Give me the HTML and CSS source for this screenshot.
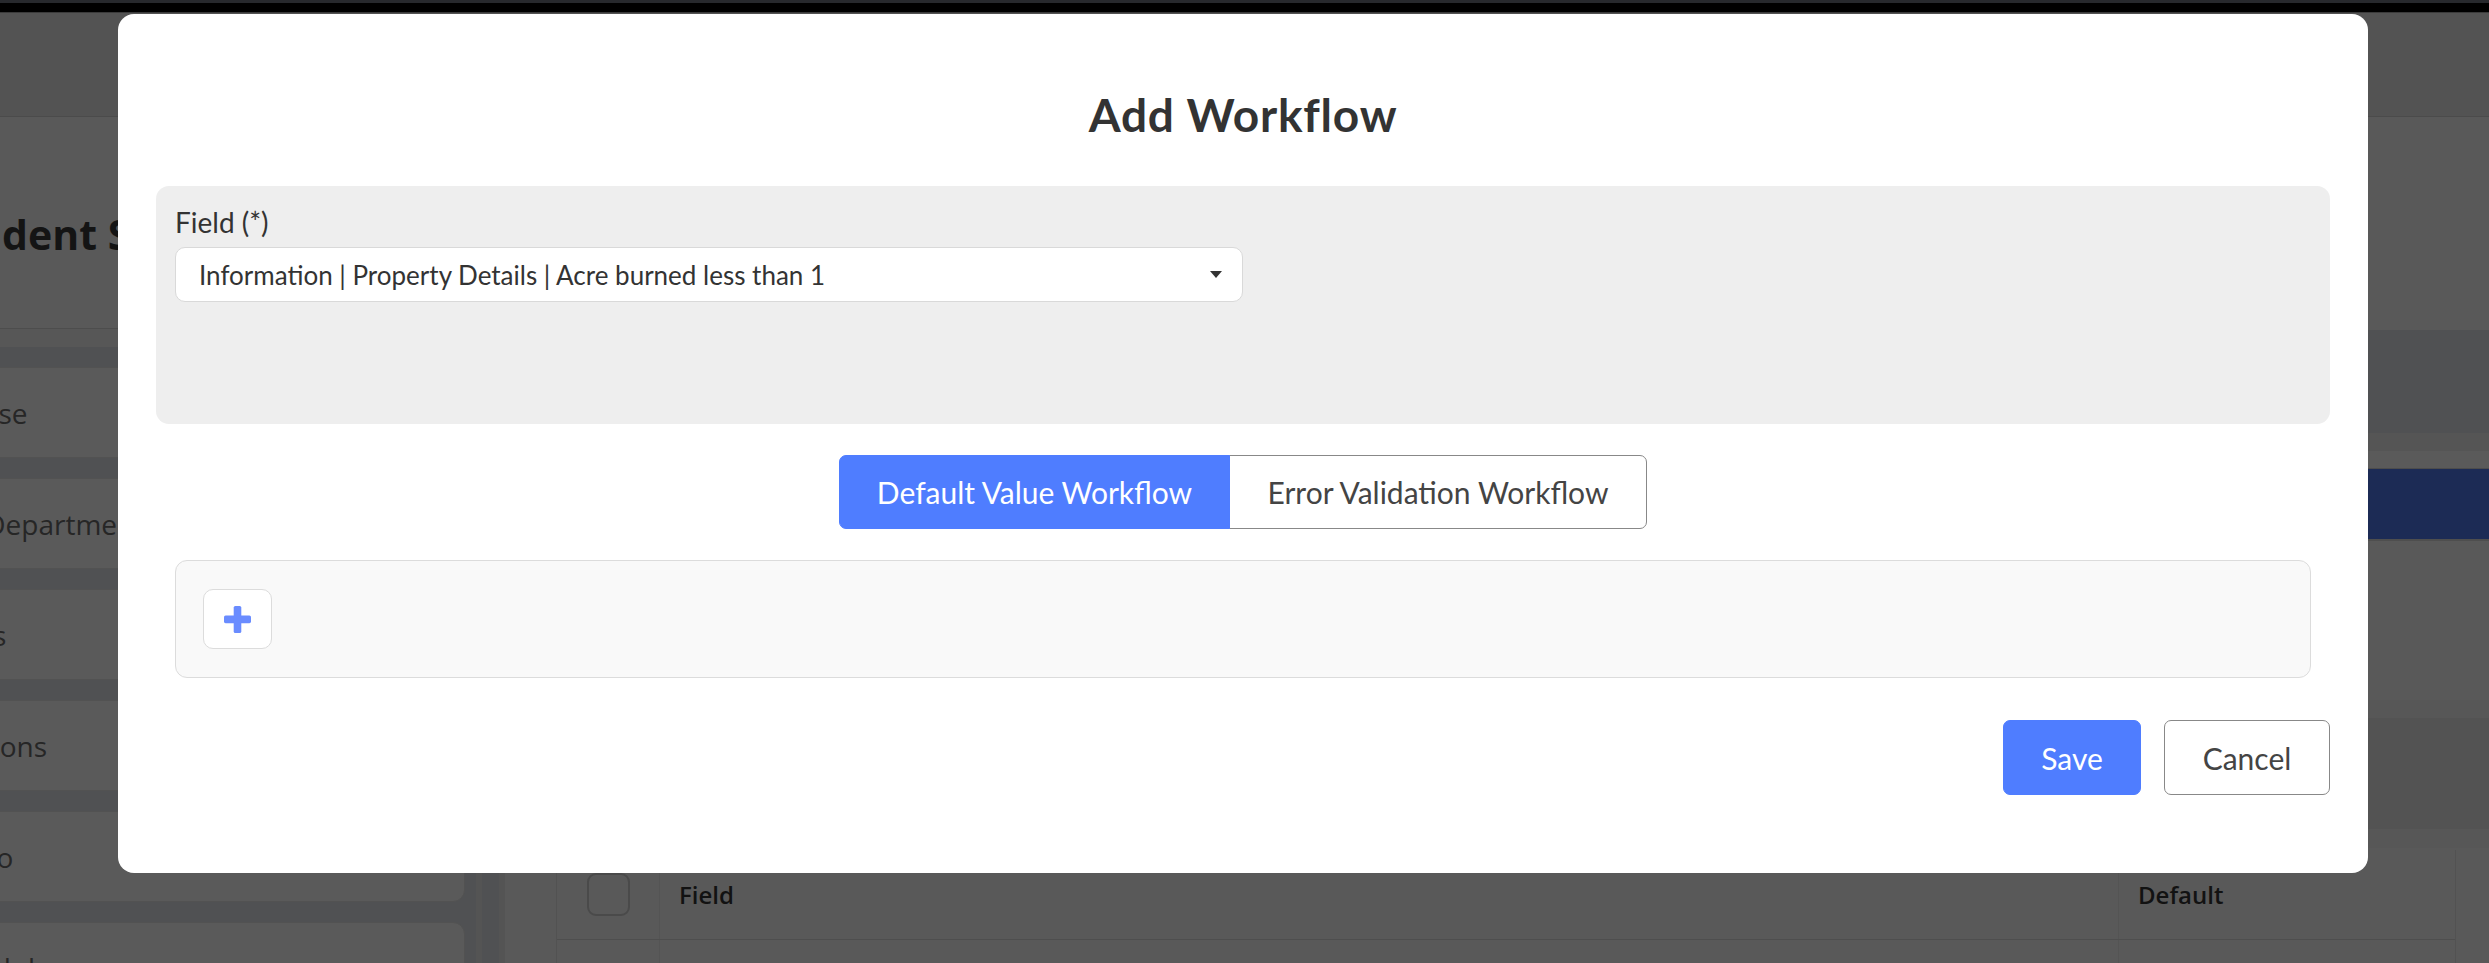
FILE: index.html
```html
<!DOCTYPE html>
<html lang="en">
<head>
<meta charset="utf-8">
<title>Add Workflow</title>
<link rel="stylesheet" href="styles.css">
</head>
<body>
<div class="page">
  <div class="topbar"></div>
  <div class="header"></div>
  <div class="main">
    <aside class="sidebar">
      <div class="side-title"><h2>Incident Settings</h2></div>
      <div class="side-spacer"></div>
      <ul class="side-list">
        <li class="side-item">Response</li>
        <li class="side-item">Police Department</li>
        <li class="side-item">Stations</li>
        <li class="side-item">Operations</li>
        <li class="side-item">Portfolio</li>
        <li class="side-item">Reschedule</li>
      </ul>
    </aside>
    <div class="scroll-strip"></div>
    <section class="content">
      <div class="c-hero"></div>
      <div class="c-band"></div>
      <div class="c-sub"></div>
      <div class="c-nav"></div>
      <div class="c-panel"></div>
      <div class="c-filter"></div>
      <div class="table-wrap">
        <div class="t-row t-head">
          <div class="t-check"><span class="checkbox"></span></div>
          <div class="t-field">Field</div>
          <div class="t-default">Default</div>
        </div>
        <div class="t-row">
          <div class="t-check"></div>
          <div class="t-field"></div>
          <div class="t-default"></div>
        </div>
      </div>
    </section>
  </div>
</div>

<div class="overlay">
  <div class="modal">
    <h1 class="modal-title">Add Workflow</h1>
    <div class="field-panel">
      <label class="field-label">Field (*)</label>
      <div class="select">
        <span class="select-text">Information | Property Details | Acre burned less than 1</span>
        <span class="caret"></span>
      </div>
    </div>
    <div class="tabs">
      <button class="tab tab-active">Default Value Workflow</button>
      <button class="tab tab-plain">Error Validation Workflow</button>
    </div>
    <div class="workflow-box">
      <button class="add-btn" aria-label="Add">
        <svg width="27" height="27" viewBox="0 0 27 27" aria-hidden="true">
          <rect x="0" y="9.6" width="27" height="7.6" rx="1.6" fill="#6a8cff"/>
          <rect x="9.7" y="0" width="7.6" height="27" rx="1.6" fill="#6a8cff"/>
        </svg>
      </button>
    </div>
    <div class="actions">
      <button class="btn btn-save">Save</button>
      <button class="btn btn-cancel">Cancel</button>
    </div>
  </div>
</div>
</body>
</html>
```

FILE: styles.css
```css
* { box-sizing: border-box; }

html, body {
  margin: 0;
  padding: 0;
  width: 2489px;
  height: 963px;
  overflow: hidden;
  background: #595959;
  font-family: "Open Sans", "Liberation Sans", sans-serif;
}

/* ---------- dimmed page underneath ---------- */
.page {
  display: flex;
  flex-direction: column;
  height: 963px;
  overflow: hidden;
}

.topbar {
  flex-shrink: 0;
  height: 13px;
  background: #000;
  border-top: 3px solid #27292d;
  border-bottom: 1px solid #3b3b3b;
}

.header {
  flex-shrink: 0;
  height: 104px;
  background: #535353;
  border-bottom: 1px solid #4b4b4b;
}

.main {
  display: flex;
  flex: 1;
  min-height: 0;
  overflow: hidden;
}

.sidebar {
  flex-shrink: 0;
  width: 576px;
  margin-left: -100px;
  display: flex;
  flex-direction: column;
  background: #505153;
}

.side-title {
  flex-shrink: 0;
  height: 212px;
  background: #595959;
  border-bottom: 1px solid #4d4d4d;
  display: flex;
  align-items: center;
  padding-left: 28px;
}

.side-title h2 {
  margin: 0;
  padding-top: 22px;
  font-size: 41px;
  font-weight: 700;
  color: #141414;
  white-space: nowrap;
}

.side-spacer {
  flex-shrink: 0;
  height: 18px;
  background: #575757;
}

.side-list {
  flex-shrink: 0;
  list-style: none;
  margin: 0;
  padding: 20px 0 0 0;
  display: flex;
  flex-direction: column;
  gap: 20px;
}

.side-item {
  flex-shrink: 0;
  height: 91px;
  width: 565px;
  background: #5a5a5a;
  border: 1px solid #525252;
  border-radius: 0 12px 12px 0;
  display: flex;
  align-items: center;
  padding-left: 0;
  font-size: 28px;
  color: #262626;
  white-space: nowrap;
}

.scroll-strip {
  flex-shrink: 0;
  width: 29px;
  background: #505153;
  border-left: 6px solid #545454;
  border-right: 6px solid #545454;
}

.content {
  flex: 1;
  display: flex;
  flex-direction: column;
  background: #595959;
}

.content > div { flex-shrink: 0; }

.c-hero { height: 213px; background: #595959; }
.c-band { height: 103px; background: #505153; }
.c-sub {
  height: 36px;
  background: #5a5a5a;
  border-top: 18px solid #555;
  border-bottom: 1px solid #4c4c4c;
}
.c-nav { height: 70px; background: #1c2b55; }
.c-panel {
  height: 161px;
  background: #595959;
  border-top: 2px solid #4e4e4e;
}
.c-filter {
  height: 148px;
  background: #535353;
  border-top: 18px solid #575757;
  border-bottom: 19px solid #575757;
}

.table-wrap {
  margin: 2px 33px 0 51px;
  border-left: 1px solid #525252;
  border-right: 1px solid #525252;
}

.t-row {
  display: flex;
  height: 90px;
  border-bottom: 1px solid #4e4e4e;
}

.t-check {
  width: 103px;
  border-right: 1px solid #545454;
  display: flex;
  align-items: center;
  padding-left: 30px;
}

.checkbox {
  width: 43px;
  height: 43px;
  border: 2px solid #4a4a4a;
  border-radius: 9px;
}

.t-field {
  flex: 1;
  border-right: 1px solid #545454;
  display: flex;
  align-items: center;
  padding-left: 19px;
  font-size: 24px;
  font-weight: 600;
  color: #121212;
}

.t-default {
  width: 336px;
  display: flex;
  align-items: center;
  padding-left: 19px;
  font-size: 24px;
  font-weight: 600;
  color: #121212;
}

/* ---------- modal ---------- */
.overlay {
  position: fixed;
  inset: 0;
  display: flex;
  align-items: flex-start;
  padding: 14px 0 0 118px;
}

.modal {
  width: 2250px;
  background: #fff;
  border-radius: 16px;
  padding: 38px 38px 78px;
  font-family: Lato, "Liberation Sans", sans-serif;
}

.modal-title {
  margin: 35px 0 44px;
  font-family: Lato, "Liberation Sans", sans-serif;
  font-size: 46px;
  line-height: 55px;
  font-weight: 700;
  letter-spacing: 0.8px;
  color: #333;
  text-align: center;
}

.field-panel {
  background: #eee;
  border-radius: 13px;
  padding: 19px 19px 122px;
}

.field-label {
  display: block;
  font-size: 28px;
  line-height: 34px;
  color: #333;
  margin-bottom: 8px;
}

.select {
  width: 1068px;
  height: 55px;
  background: #fff;
  border: 1px solid #d9d9d9;
  border-radius: 10px;
  display: flex;
  align-items: center;
  padding: 0 20px 0 23px;
  font-size: 26px;
  color: #333;
}

.select-text { white-space: nowrap; }

.caret {
  margin-left: auto;
  width: 0;
  height: 0;
  border-top: 7px solid #333;
  border-left: 6px solid transparent;
  border-right: 6px solid transparent;
}

.tabs {
  margin-top: 31px;
  display: flex;
  justify-content: center;
}

.tab {
  height: 74px;
  font-family: Lato, "Liberation Sans", sans-serif;
  font-size: 30px;
  padding: 0;
  cursor: pointer;
}

.tab-active {
  width: 391px;
  background: #4f7dff;
  color: #fff;
  border: 1px solid #4f7dff;
  border-radius: 7px 0 0 7px;
  position: relative;
  z-index: 1;
}

.tab-plain {
  width: 418px;
  margin-left: -1px;
  background: #fff;
  color: #444;
  border: 1px solid #888;
  border-radius: 0 7px 7px 0;
}

.workflow-box {
  margin: 31px 19px 0;
  height: 118px;
  background: #f9f9f9;
  border: 1px solid #dcdcdc;
  border-radius: 12px;
  padding: 28px 27px;
}

.add-btn {
  width: 69px;
  height: 60px;
  background: #fff;
  border: 1px solid #dcdcdc;
  border-radius: 10px;
  display: flex;
  align-items: center;
  justify-content: center;
  padding: 0;
  cursor: pointer;
}

.actions {
  margin-top: 42px;
  display: flex;
  justify-content: flex-end;
  gap: 23px;
}

.btn {
  height: 75px;
  font-family: Lato, "Liberation Sans", sans-serif;
  font-size: 30px;
  border-radius: 7px;
  padding: 0;
  cursor: pointer;
}

.btn-save {
  width: 138px;
  background: #4f7dff;
  border: 1px solid #4f7dff;
  color: #fff;
}

.btn-cancel {
  width: 166px;
  background: #fff;
  border: 1px solid #888;
  color: #444;
}
```
